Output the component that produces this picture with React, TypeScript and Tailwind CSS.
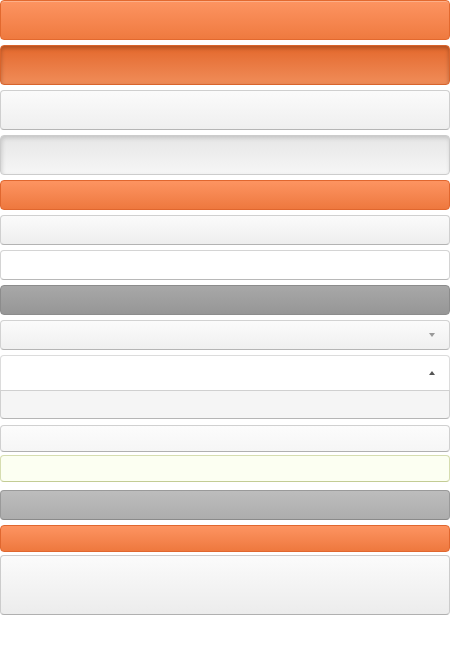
import React from "react";

function Caret({ up }: { up?: boolean }) {
  return (
    <span
      className={`absolute right-[14px] top-1/2 -translate-y-1/2 h-0 w-0 border-x-[3px] border-x-transparent ${
        up ? "border-b-[4px] border-b-[#555]" : "border-t-[4px] border-t-[#999]"
      }`}
    />
  );
}

export default function App() {
  return (
    <div className="flex w-[450px] flex-col bg-white pb-9 font-['Liberation_Sans',sans-serif]">
      {/* big orange */}
      <div className="h-10 rounded border border-[#e2692f] bg-linear-to-b from-[#fd9461] to-[#ef7a3f] shadow-[inset_0_1px_0_rgba(255,255,255,0.25)]" />
      {/* big orange, pressed */}
      <div className="mt-[5px] h-10 rounded border border-[#d9642c] bg-linear-to-b from-[#e3682b] to-[#f08c58] shadow-[inset_0_2px_4px_rgba(0,0,0,0.25)]" />
      {/* big light */}
      <div className="mt-[5px] h-10 rounded border border-[#cfcfcf] border-b-[#b5b5b5] bg-linear-to-b from-[#fbfbfb] to-[#efefef]" />
      {/* big light, pressed */}
      <div className="mt-[5px] h-10 rounded border border-[#cccccc] bg-linear-to-b from-[#e6e6e6] to-[#f6f6f6] shadow-[inset_1px_2px_4px_rgba(0,0,0,0.15)]" />

      {/* small orange */}
      <div className="mt-[5px] h-[30px] rounded border border-[#e0672f] bg-linear-to-b from-[#fd9461] to-[#ee783e]" />
      {/* small light */}
      <div className="mt-[5px] h-[30px] rounded border border-[#d0d0d0] border-b-[#b3b3b3] bg-linear-to-b from-[#fbfbfb] to-[#eeeeee]" />
      {/* small white */}
      <div className="mt-[5px] h-[30px] rounded border border-[#d4d4d4] border-b-[#b8b8b8] bg-white" />
      {/* dark gray */}
      <div className="mt-[5px] h-[30px] rounded border border-[#8c8c8c] bg-linear-to-b from-[#a8a8a8] to-[#969696]" />

      {/* select closed */}
      <div className="relative mt-[5px] h-[30px] rounded border border-[#d2d2d2] border-b-[#b5b5b5] bg-linear-to-b from-[#fbfbfb] to-[#f0f0f0]">
        <Caret />
      </div>
      {/* select open */}
      <div className="relative mt-[5px] h-[35px] rounded-t border border-b-0 border-[#dcdcdc] bg-white">
        <Caret up />
      </div>
      <div className="h-[29px] rounded-b border border-[#d0d0d0] border-b-[#b5b5b5] bg-[#f5f5f5]" />

      {/* plain row */}
      <div className="mt-[6px] h-[27px] rounded border border-[#d0d0d0] border-b-[#b0b0b0] bg-linear-to-b from-[#fcfcfc] to-[#f6f6f6]" />
      {/* highlighted row */}
      <div className="mt-[3px] h-[27px] rounded border border-[#d6ddb0] border-b-[#c3cc94] bg-[#fcfff2]" />
      {/* light gray */}
      <div className="mt-2 h-[30px] rounded border border-[#9a9a9a] border-b-[#8a8a8a] bg-linear-to-b from-[#bdbdbd] to-[#adadad]" />
      {/* orange small */}
      <div className="mt-[5px] h-[27px] rounded border border-[#e0672f] bg-linear-to-b from-[#fd9461] to-[#ee783e]" />
      {/* tall light */}
      <div className="mt-[3px] h-[60px] rounded border border-[#cccccc] border-b-[#b0b0b0] bg-linear-to-b from-[#fbfbfb] to-[#ececec]" />
    </div>
  );
}
